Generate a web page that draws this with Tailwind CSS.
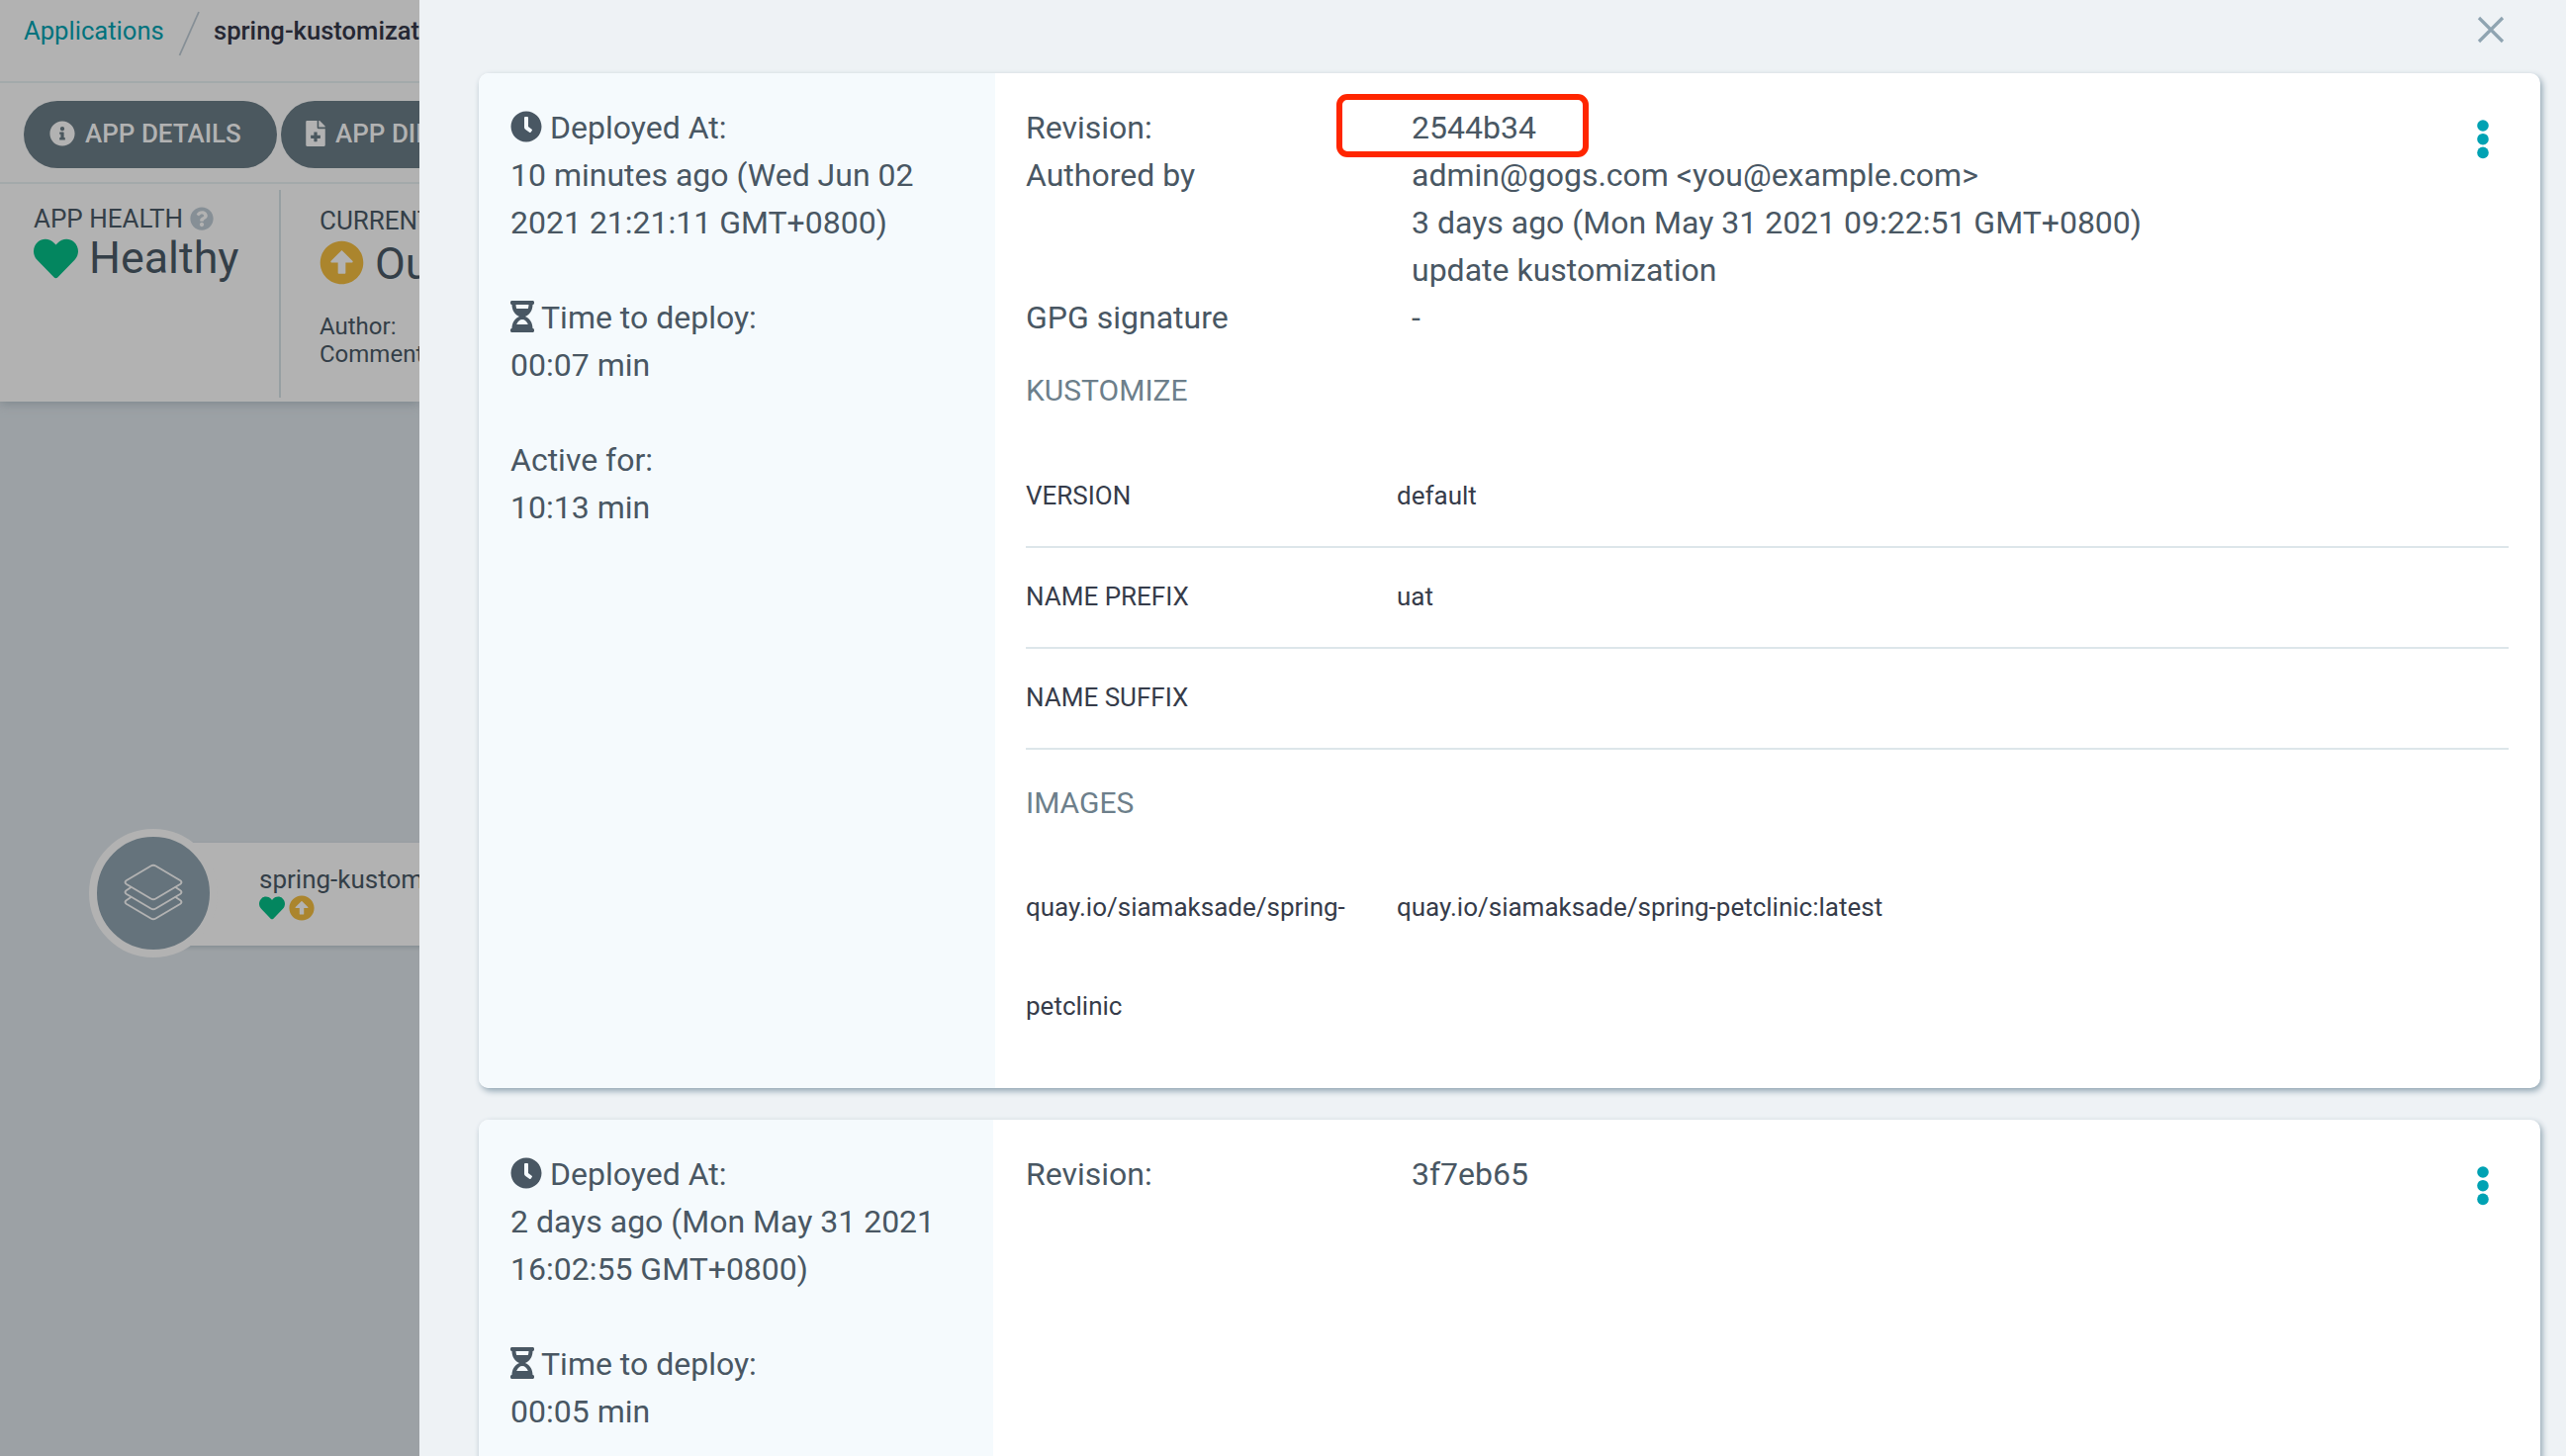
<!DOCTYPE html>
<html lang="en">
<head>
<meta charset="utf-8">
<title>spring-kustomization - History</title>
<script src="https://cdn.jsdelivr.net/npm/@tailwindcss/browser@4"></script>
</head>
<body class="overflow-hidden">
<svg class="hidden">
  <symbol id="clock" viewBox="0 0 512 512"><path d="M256,8C119,8,8,119,8,256S119,504,256,504,504,393,504,256,393,8,256,8Zm92.49,313h0l-20,25a16,16,0,0,1-22.49,2.5h0l-67-49.72a40,40,0,0,1-15-31.23V112a16,16,0,0,1,16-16h32a16,16,0,0,1,16,16V256l58,42.500A16,16,0,0,1,348.490,321Z"/></symbol>
  <symbol id="hourglass" viewBox="0 0 384 512"><path d="M360 0H24C10.745 0 0 10.745 0 24v16c0 13.255 10.745 24 24 24 0 90.965 51.016 167.734 120.842 192C75.016 280.266 24 357.035 24 448c-13.255 0-24 10.745-24 24v16c0 13.255 10.745 24 24 24h336c13.255 0 24-10.745 24-24v-16c0-13.255-10.745-24-24-24 0-90.965-51.016-167.734-120.842-192C308.984 231.734 360 154.965 360 64c13.255 0 24-10.745 24-24V24c0-13.255-10.745-24-24-24zm-75.078 384H99.08c17.059-46.797 52.096-80 92.92-80 40.821 0 75.862 33.196 92.922 80zm.019-256H99.078C91.988 108.548 88 86.748 88 64h208c0 22.805-3.987 44.587-11.059 64z"/></symbol>
  <symbol id="heart" viewBox="0 0 512 512"><path d="M462.3 62.6C407.5 15.9 326 24.3 275.7 76.2L256 96.5l-19.7-20.3C186.1 24.3 104.5 15.9 49.7 62.6c-62.8 53.6-66.1 149.8-9.9 207.9l193.5 199.8c12.5 12.9 32.8 12.9 45.3 0l193.5-199.8c56.3-58.1 53-154.3-9.8-207.9z"/></symbol>
  <symbol id="arrow-up" viewBox="0 0 512 512"><path d="M8 256C8 119 119 8 256 8s248 111 248 248-111 248-248 248S8 393 8 256zm292 116V256h70.9c10.7 0 16.1-13 8.500-20.500L264.500 121.200c-4.700-4.700-12.200-4.700-16.900 0l-115 114.300c-7.600 7.600-2.200 20.500 8.500 20.500H212v116c0 6.600 5.400 12 12 12h64c6.600 0 12-5.400 12-12z"/></symbol>
  <symbol id="info" viewBox="0 0 512 512"><path d="M256 8C119.043 8 8 119.083 8 256c0 136.997 111.043 248 248 248s248-111.003 248-248C504 119.083 392.957 8 256 8zm0 110c23.196 0 42 18.804 42 42s-18.804 42-42 42-42-18.804-42-42 18.804-42 42-42zm56 254c0 6.627-5.373 12-12 12h-88c-6.627 0-12-5.373-12-12v-24c0-6.627 5.373-12 12-12h12v-64h-12c-6.627 0-12-5.373-12-12v-24c0-6.627 5.373-12 12-12h64c6.627 0 12 5.373 12 12v100h12c6.627 0 12 5.373 12 12v24z"/></symbol>
  <symbol id="question" viewBox="0 0 512 512"><path d="M504 256c0 136.997-111.043 248-248 248S8 392.997 8 256C8 119.083 119.043 8 256 8s248 111.083 248 248zM262.655 90c-54.497 0-89.255 22.957-116.549 63.758-3.536 5.286-2.353 12.415 2.715 16.258l34.699 26.31c5.205 3.947 12.621 3.008 16.665-2.122 17.864-22.658 30.113-35.797 57.303-35.797 20.429 0 45.698 13.148 45.698 32.958 0 14.976-12.363 22.667-32.534 33.976C247.128 238.528 216 254.941 216 296v4c0 6.627 5.373 12 12 12h56c6.627 0 12-5.373 12-12v-1.333c0-28.462 83.186-29.647 83.186-106.667 0-58.002-60.165-102-116.531-102zM256 338c-25.365 0-46 20.635-46 46 0 25.364 20.635 46 46 46s46-20.636 46-46c0-25.365-20.635-46-46-46z"/></symbol>
  <symbol id="file-plus" viewBox="0 0 384 512"><path d="M377 105L279.1 7c-4.5-4.5-10.6-7-17-7H256v128h128v-6.1c0-6.3-2.5-12.4-7-16.900zm-153 31V0H24C10.700 0 0 10.700 0 24v464c0 13.300 10.700 24 24 24h336c13.300 0 24-10.700 24-24V160H248c-13.200 0-24-10.800-24-24zm64 160v48c0 4.400-3.600 8-8 8h-56v56c0 4.400-3.600 8-8 8h-48c-4.400 0-8-3.600-8-8v-56h-56c-4.400 0-8-3.600-8-8v-48c0-4.400 3.600-8 8-8h56v-56c0-4.400 3.600-8 8-8h48c4.400 0 8 3.600 8 8v56h56c4.400 0 8 3.600 8 8z"/></symbol>
  <symbol id="dots" viewBox="0 0 12 40"><circle cx="6" cy="6" r="5.800"/><circle cx="6" cy="19.700" r="5.800"/><circle cx="6" cy="33.400" r="5.800"/></symbol>
</svg>
<div class="flex h-[1472px] w-[2594px] overflow-hidden font-[Roboto,sans-serif] text-[#495763]">

  <!-- Application page, dimmed behind the panel -->
  <div class="flex h-full w-[424px] shrink-0 flex-col overflow-hidden whitespace-nowrap bg-[#9ca1a5] text-[#343f48]">
    <div class="relative z-10 flex h-[406px] shrink-0 flex-col bg-[#b2b2b2] shadow-[0_2px_10px_#7d878d]">
      <div class="h-[84px] border-b-2 border-[#a3a9aa]">
        <div class="flex h-[62px] items-center pl-6 text-[26px]">
          <a class="w-[142px] shrink-0 text-[25.6px] text-[#00727d]">Applications</a>
          <svg class="ml-[14px] mt-[6px] h-[46px] w-6 shrink-0" viewBox="0 0 24 46" fill="none" stroke="#868f96" stroke-width="1.800"><path d="M21 1 1.500 45"/></svg>
          <span class="ml-3 text-[25.6px] font-medium text-[#252733]">spring-kustomization</span>
        </div>
      </div>
      <div class="flex h-[102px] gap-1 border-b-2 border-[#a3a9aa] pl-6 pt-[18px] text-[26px] font-medium text-[#b2b2b2]">
        <div class="flex h-[68px] w-[256px] shrink-0 items-center rounded-full bg-[#4b585f] pl-[26px]">
          <svg class="mt-[-3px] h-[26px] w-[26px] fill-current"><use href="#info"/></svg>
          <span class="ml-[10px] mt-[-2px]">APP DETAILS</span>
        </div>
        <div class="flex h-[68px] w-[220px] shrink-0 items-center rounded-full bg-[#4b585f] pl-[25px]">
          <svg class="mt-[-3px] h-[26px] w-5 fill-current"><use href="#file-plus"/></svg>
          <span class="ml-[10px] mt-[-2px]">APP DIFF</span>
        </div>
      </div>
      <div class="flex pt-[6px]">
        <div class="h-[210px] w-[284px] shrink-0 border-r-2 border-[#979fa2] pl-[34px] pt-[13px]">
          <div class="flex h-8 items-center text-[26px]">APP HEALTH<svg class="ml-[7px] h-6 w-6 fill-[#868f96]"><use href="#question"/></svg></div>
          <div class="flex h-12 items-center text-[44.8px] leading-[48px]"><svg class="h-[45px] w-[45px] fill-[#03865f]"><use href="#heart"/></svg><span class="ml-[11px]">Healthy</span></div>
        </div>
        <div class="pl-[39px] pt-[15px]">
          <div class="h-8 text-[26px] leading-8">CURRENT</div>
          <div class="mt-1 flex h-12 items-center text-[44.8px] leading-[48px]"><svg class="mt-[-4px] h-[45px] w-[45px] fill-[#ab852d]"><use href="#arrow-up"/></svg><span class="ml-[11px]">OutOfSync</span></div>
          <div class="mt-[25px] text-[24px] leading-[28px]">Author:<br>Comment:</div>
        </div>
      </div>
    </div>

    <!-- Resource graph -->
    <div class="relative grow">
      <div class="absolute left-[155px] top-[446px] h-[104px] w-[400px] bg-[#b2b2b2] pl-[107px] pt-[22px] shadow-[2px_2px_4px_#858e93]">
        <div class="h-[31px] text-[26px] leading-[31px]">spring-kustomization</div>
        <div class="flex gap-1"><svg class="h-[26px] w-[26px] fill-[#03865f]"><use href="#heart"/></svg><svg class="h-[26px] w-[26px] fill-[#ab852d]"><use href="#arrow-up"/></svg></div>
      </div>
      <div class="absolute left-[90px] top-[432px] flex h-[130px] w-[130px] items-center justify-center rounded-full border-8 border-[#b2b2b2] bg-[#65737c]">
        <svg class="mt-[-2px] h-[60px] w-[60px]" viewBox="0 0 60 60" fill="none" stroke="#b2b2b2" stroke-width="1.900" stroke-linejoin="round" stroke-linecap="round"><path d="M27.500 3.500Q30 2 32.500 3.500L57 18Q60 20 57 22L32.500 36.500Q30 38 27.500 36.500L3 22Q0 20 3 18Z"/><path d="M7.500 25 3 28Q0 30 3 32L27.500 46.500Q30 48 32.500 46.500L57 32Q60 30 57 28L52.500 25"/><path d="M7.500 35 3 38Q0 40 3 42L27.500 56.500Q30 58 32.500 56.500L57 42Q60 40 57 38L52.500 35"/></svg>
      </div>
    </div>
  </div>

  <!-- History panel -->
  <div class="flex grow flex-col bg-[#eef2f5] pl-[60px] pr-[26px] text-[32px] leading-[48px]">
    <div class="flex h-[74px] shrink-0 justify-end pr-9 pt-[16px]">
      <svg class="h-7 w-7" viewBox="0 0 28 28" stroke="#8fa4b1" stroke-width="3.200"><path d="M2 2 26 26M26 2 2 26"/></svg>
    </div>

    <div class="flex h-[1026px] shrink-0 rounded-[10px] bg-white shadow-[2px_3px_6px_#8fa4b1]">
      <div class="w-[522px] shrink-0 rounded-l-[10px] bg-[#f5fafd] px-8 pt-[31px]">
        <div class="flex"><svg class="mr-2 mt-[7px] h-8 w-8 fill-current"><use href="#clock"/></svg>Deployed At:</div>
        <div class="whitespace-nowrap">10 minutes ago (Wed Jun 02<br>2021 21:21:11 GMT+0800)</div>
        <div class="mt-12 flex"><svg class="mr-[7px] mt-[7px] h-8 w-6 fill-current"><use href="#hourglass"/></svg>Time to deploy:</div>
        <div>00:07 min</div>
        <div class="mt-12">Active for:</div>
        <div>10:13 min</div>
      </div>
      <div class="grow pl-[31px] pr-8 pt-[31px]">
        <div class="relative grid grid-cols-[390px_1fr]">
          <div>Revision:</div><div>2544b34</div>
          <div>Authored by</div><div>admin@gogs.com &lt;you@example.com&gt;<br>3 days ago (Mon May 31 2021 09:22:51 GMT+0800)<br>update kustomization</div>
          <div>GPG signature</div><div>-</div>
          <div class="absolute left-[314px] top-[-10px] h-[64px] w-[255px] rounded-[11px] border-[6px] border-[#ff2600]"></div>
          <svg class="absolute right-[20px] top-[16px] h-10 w-3 fill-[#00a2b3]"><use href="#dots"/></svg>
        </div>
        <div class="flex h-[107px] items-center pb-[7px] text-[30px] text-[#6d7f8b]">KUSTOMIZE</div>
        <div class="text-[26px] leading-[98px] text-[#363c4a]">
          <div class="grid h-[102px] grid-cols-[375px_1fr] border-b-2 border-[#dde6ea]"><div>VERSION</div><div>default</div></div>
          <div class="grid h-[102px] grid-cols-[375px_1fr] border-b-2 border-[#dde6ea]"><div>NAME PREFIX</div><div>uat</div></div>
          <div class="grid h-[102px] grid-cols-[375px_1fr] border-b-2 border-[#dde6ea]"><div>NAME SUFFIX</div><div></div></div>
        </div>
        <div class="flex h-[109px] items-center pb-px text-[30px] text-[#6d7f8b]">IMAGES</div>
        <div class="grid grid-cols-[375px_1fr] text-[26px] leading-[100px] text-[#363c4a]"><div>quay.io/siamaksade/spring-<br>petclinic</div><div>quay.io/siamaksade/spring-petclinic:latest</div></div>
      </div>
    </div>

    <div class="mt-8 flex h-[480px] shrink-0 rounded-[10px] bg-white shadow-[2px_3px_6px_#8fa4b1]">
      <div class="w-[520px] shrink-0 rounded-l-[10px] bg-[#f5fafd] px-8 pt-[31px]">
        <div class="flex"><svg class="mr-2 mt-[7px] h-8 w-8 fill-current"><use href="#clock"/></svg>Deployed At:</div>
        <div class="whitespace-nowrap">2 days ago (Mon May 31 2021<br>16:02:55 GMT+0800)</div>
        <div class="mt-12 flex"><svg class="mr-[7px] mt-[7px] h-8 w-6 fill-current"><use href="#hourglass"/></svg>Time to deploy:</div>
        <div>00:05 min</div>
      </div>
      <div class="grow pl-[33px] pr-8 pt-[31px]">
        <div class="relative grid grid-cols-[390px_1fr]">
          <div>Revision:</div><div>3f7eb65</div>
          <svg class="absolute right-[20px] top-[16px] h-10 w-3 fill-[#00a2b3]"><use href="#dots"/></svg>
        </div>
      </div>
    </div>
  </div>
</div>
</body>
</html>
